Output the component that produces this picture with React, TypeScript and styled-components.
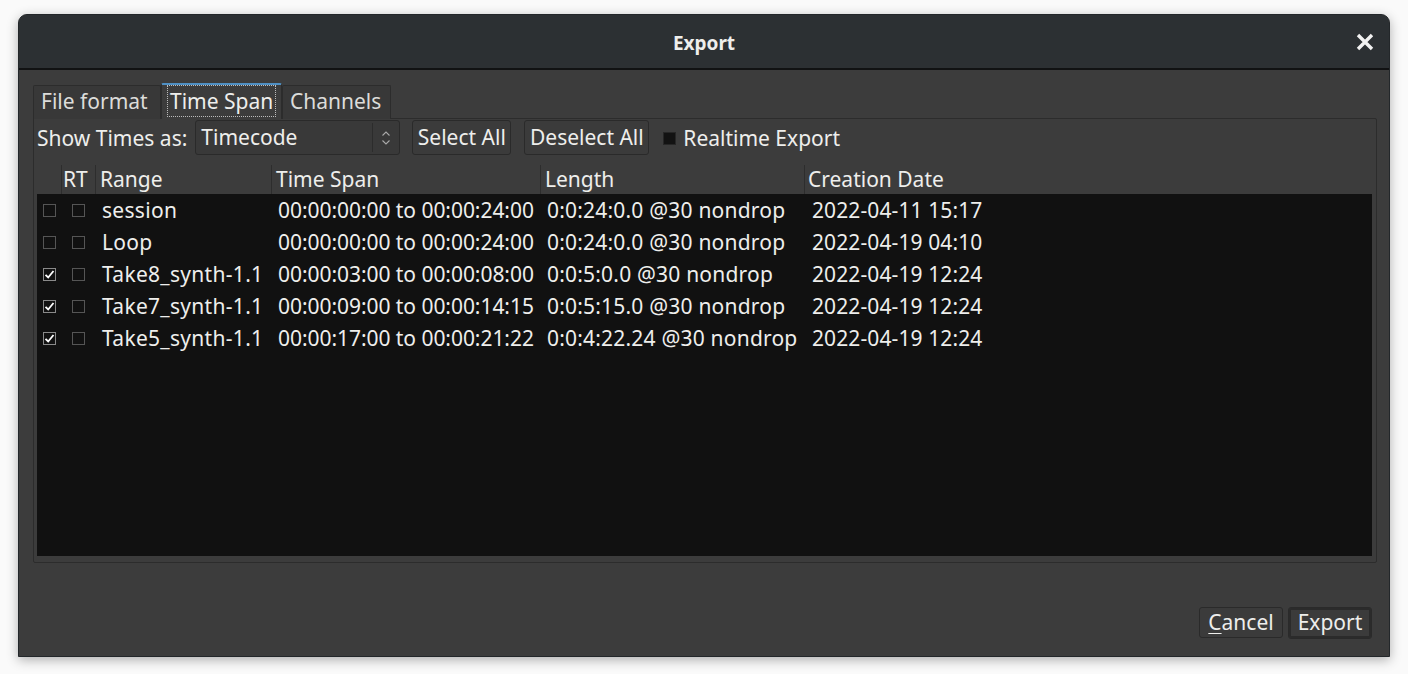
import React from "react";
import styled, { createGlobalStyle } from "styled-components";

const Global = createGlobalStyle`
  html, body { margin: 0; padding: 0; background: #ffffff; }
  body { font-family: "Noto Sans", "DejaVu Sans", sans-serif; }
  * { box-sizing: border-box; }
`;

const Page = styled.div`
  width: 1408px;
  height: 674px;
  padding: 14px 0 0 18px;
  background: #fafafa;
`;

const Window = styled.div`
  width: 1372px;
  height: 643px;
  border: 1px solid #23272a;
  border-radius: 9px 9px 0 0;
  background: #3c3c3c;
  display: flex;
  flex-direction: column;
  box-shadow: 0 3px 12px rgba(0, 0, 0, 0.3);
  overflow: hidden;
  color: #eeeeec;
  font-size: 21px;
`;

const TitleBar = styled.div`
  height: 55px;
  flex: none;
  background: #2c3033;
  border-bottom: 2px solid #111213;
  display: flex;
  align-items: center;
  justify-content: center;
  position: relative;
`;

const Title = styled.div`
  font-weight: bold;
  font-size: 19px;
  color: #eeeeec;
  margin-top: 3px;
`;

const CloseBtn = styled.div`
  position: absolute;
  right: 14px;
  top: 17px;
  width: 20px;
  height: 20px;
  display: flex;
  align-items: center;
  justify-content: center;
`;

const Content = styled.div`
  flex: 1;
  display: flex;
  flex-direction: column;
  padding: 12px 12px 17px 14px;
`;

const TabRow = styled.div`
  display: flex;
  height: 36px;
  align-items: flex-end;
`;

const Tab = styled.div<{ $active?: boolean; $w: number }>`
  width: ${(p) => p.$w}px;
  height: ${(p) => (p.$active ? 36 : 34)}px;
  display: flex;
  align-items: center;
  padding-left: ${(p) => (p.$active ? 6 : 7)}px;
  padding-bottom: 3px;
  background: ${(p) => (p.$active ? "#3c3c3c" : "#383838")};
  border: 1px solid #2c2c2c;
  border-bottom: none;
  border-top: ${(p) => (p.$active ? "2px solid #4f90c4" : "1px solid #2c2c2c")};
  border-radius: 2px 2px 0 0;
  margin-bottom: -1px;
  position: relative;
  z-index: ${(p) => (p.$active ? 2 : 1)};
  color: ${(p) => (p.$active ? "#eeeeec" : "#dcdcda")};
`;

const FocusText = styled.span`
  outline: 1px dotted #bcbcbc;
  outline-offset: 0;
  padding: 0 2px;
  line-height: 30px;
`;

const Pane = styled.div`
  flex: 1;
  border: 1px solid #2c2c2c;
  border-radius: 0 2px 2px 2px;
  padding: 2px 4px 6px 3px;
  display: flex;
  flex-direction: column;
  width: 1344px;
`;

const Toolbar = styled.div`
  height: 35px;
  display: flex;
  align-items: center;
  padding-bottom: 2px;
`;

const Label = styled.span`
  margin-right: 8px;
`;

const Combo = styled.div`
  width: 205px;
  height: 35px;
  border: 1px solid #2a2a2a;
  border-radius: 3px;
  background: #393939;
  display: flex;
  align-items: center;
  margin-right: 12px;
  padding-bottom: 2px;
`;

const ComboText = styled.div`
  flex: 1;
  padding-left: 5px;
`;

const ComboArrow = styled.div`
  width: 27px;
  height: 29px;
  border-left: 1px solid #2c2c2c;
  display: flex;
  align-items: center;
  justify-content: center;
  margin-top: 2px;
`;

const Button = styled.div<{ $w: number; $h: number; $default?: boolean }>`
  width: ${(p) => p.$w}px;
  height: ${(p) => p.$h}px;
  border: 1px solid #2a2a2a;
  border-radius: 3px;
  background: #3b3b3b;
  display: flex;
  align-items: center;
  justify-content: center;
  padding-bottom: 2px;
  box-shadow: ${(p) => (p.$default ? "inset 0 0 0 2px #2b2b2b" : "none")};
`;

const ToolButton = styled(Button)`
  margin-right: 13px;
`;

const RtCheck = styled.div`
  width: 13px;
  height: 13px;
  background: #121212;
  border: 1px solid #262626;
  margin-right: 7px;
  margin-left: 1px;
  margin-top: 2px;
`;

const Table = styled.div`
  margin-top: 7px;
  flex: 1;
  display: flex;
  flex-direction: column;
`;

const cols = "24px 34px 176px 269px 264px 1fr";

const HeaderRow = styled.div`
  display: grid;
  grid-template-columns: ${cols};
  height: 31px;
`;

const HeaderCell = styled.div<{ $pad: number; $sep?: boolean }>`
  padding-left: ${(p) => p.$pad}px;
  padding-bottom: 3px;
  border-left: ${(p) => (p.$sep ? "1px solid #2d2d2d" : "none")};
  display: flex;
  align-items: center;
  white-space: nowrap;
  margin: 2px 0 1px;
`;

const Body = styled.div`
  flex: 1;
  background: #111111;
`;

const Row = styled.div`
  display: grid;
  grid-template-columns: ${cols};
  height: 32px;
`;

const Cell = styled.div<{ $pad?: number; $center?: boolean; $ls?: number }>`
  display: flex;
  align-items: center;
  justify-content: ${(p) => (p.$center ? "center" : "flex-start")};
  padding-left: ${(p) => p.$pad ?? 7}px;
  white-space: nowrap;
  color: #eeeeec;
  letter-spacing: ${(p) => p.$ls ?? 0}px;
`;

const Box = styled.div<{ $checked?: boolean }>`
  width: 13px;
  height: 13px;
  border: 1px solid ${(p) => (p.$checked ? "#8a8a8a" : "#555555")};
  display: flex;
  align-items: center;
  justify-content: center;
`;

const Footer = styled.div`
  display: flex;
  justify-content: flex-end;
  gap: 5px;
  padding-right: 5px;
  margin-top: 44px;
`;

const Underline = styled.span`
  text-decoration: underline;
  text-underline-offset: 3px;
  text-decoration-thickness: 1px;
`;

const Check = () => (
  <svg width="11" height="11" viewBox="0 0 11 11">
    <path d="M1.5 5.8 L4.2 8.5 L9.5 2" fill="none" stroke="#ffffff" strokeWidth="1.8" />
  </svg>
);

const rows = [
  { on: false, name: "session", span: "00:00:00:00 to 00:00:24:00", len: "0:0:24:0.0 @30 nondrop", date: "2022-04-11 15:17" },
  { on: false, name: "Loop", span: "00:00:00:00 to 00:00:24:00", len: "0:0:24:0.0 @30 nondrop", date: "2022-04-19 04:10" },
  { on: true, name: "Take8_synth-1.1", span: "00:00:03:00 to 00:00:08:00", len: "0:0:5:0.0 @30 nondrop", date: "2022-04-19 12:24" },
  { on: true, name: "Take7_synth-1.1", span: "00:00:09:00 to 00:00:14:15", len: "0:0:5:15.0 @30 nondrop", date: "2022-04-19 12:24" },
  { on: true, name: "Take5_synth-1.1", span: "00:00:17:00 to 00:00:21:22", len: "0:0:4:22.24 @30 nondrop", date: "2022-04-19 12:24" },
];

export default function App() {
  return (
    <Page>
      <Global />
      <Window>
        <TitleBar>
          <Title>Export</Title>
          <CloseBtn>
            <svg width="20" height="20" viewBox="0 0 20 20">
              <path d="M3 3 L17 17 M17 3 L3 17" stroke="#f2f2f2" strokeWidth="3.4" strokeLinecap="butt" />
            </svg>
          </CloseBtn>
        </TitleBar>
        <Content>
          <TabRow>
            <Tab $w={128}>File format</Tab>
            <Tab $w={121} $active>
              <FocusText>Time Span</FocusText>
            </Tab>
            <Tab $w={109}>Channels</Tab>
          </TabRow>
          <Pane>
            <Toolbar>
              <Label>Show Times as:</Label>
              <Combo>
                <ComboText>Timecode</ComboText>
                <ComboArrow>
                  <svg width="10" height="16" viewBox="0 0 10 16">
                    <path d="M1.5 5.5 L5 2 L8.5 5.5 M1.5 10.5 L5 14 L8.5 10.5" fill="none" stroke="#a8a8a8" strokeWidth="1.1" />
                  </svg>
                </ComboArrow>
              </Combo>
              <ToolButton $w={99} $h={35}>Select All</ToolButton>
              <ToolButton $w={125} $h={35}>Deselect All</ToolButton>
              <RtCheck />
              <span>Realtime Export</span>
            </Toolbar>
            <Table>
              <HeaderRow>
                <HeaderCell $pad={0} />
                <HeaderCell $pad={1} $sep>RT</HeaderCell>
                <HeaderCell $pad={4} $sep>Range</HeaderCell>
                <HeaderCell $pad={4} $sep>Time Span</HeaderCell>
                <HeaderCell $pad={4} $sep>Length</HeaderCell>
                <HeaderCell $pad={3} $sep>Creation Date</HeaderCell>
              </HeaderRow>
              <Body>
                {rows.map((r) => (
                  <Row key={r.name}>
                    <Cell $pad={0} $center>
                      <Box $checked={r.on}>{r.on && <Check />}</Box>
                    </Cell>
                    <Cell $pad={0} $center>
                      <Box />
                    </Cell>
                    <Cell $ls={0.3}>{r.name}</Cell>
                    <Cell $ls={-0.05}>{r.span}</Cell>
                    <Cell $ls={0.2}>{r.len}</Cell>
                    <Cell $pad={8} $ls={0.1}>{r.date}</Cell>
                  </Row>
                ))}
              </Body>
            </Table>
          </Pane>
          <Footer>
            <Button $w={84} $h={31}>
              <span>
                <Underline>C</Underline>ancel
              </span>
            </Button>
            <Button $w={84} $h={32} $default>
              Export
            </Button>
          </Footer>
        </Content>
      </Window>
    </Page>
  );
}
